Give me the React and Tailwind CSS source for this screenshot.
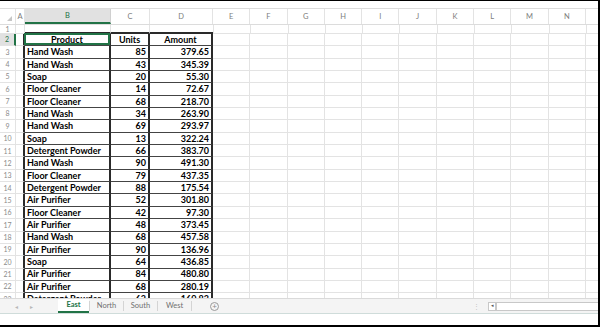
import React from "react";

const rows = [
  ["Hand Wash", 85, "379.65"],
  ["Hand Wash", 43, "345.39"],
  ["Soap", 20, "55.30"],
  ["Floor Cleaner", 14, "72.67"],
  ["Floor Cleaner", 68, "218.70"],
  ["Hand Wash", 34, "263.90"],
  ["Hand Wash", 69, "293.97"],
  ["Soap", 13, "322.24"],
  ["Detergent Powder", 66, "383.70"],
  ["Hand Wash", 90, "491.30"],
  ["Floor Cleaner", 79, "437.35"],
  ["Detergent Powder", 88, "175.54"],
  ["Air Purifier", 52, "301.80"],
  ["Floor Cleaner", 42, "97.30"],
  ["Air Purifier", 48, "373.45"],
  ["Hand Wash", 68, "457.58"],
  ["Air Purifier", 90, "136.96"],
  ["Soap", 64, "436.85"],
  ["Air Purifier", 84, "480.80"],
  ["Air Purifier", 68, "280.19"],
  ["Detergent Powder", 62, "160.83"],
];

const extraCols = ["E", "F", "G", "H", "I", "J", "K", "L", "M", "N"];

const EmptyCells = () => (
  <>
    {extraCols.map((c) => (
      <div key={c} className="w-[37.3px] shrink-0 h-full border-r border-b border-[#e3e3e3]" />
    ))}
    <div className="flex-1 h-full border-b border-[#e3e3e3]" />
  </>
);

const TopRow = () => (
  <div className="flex h-[9px]">
    <div className="w-[16px] shrink-0 h-full border-r border-b border-[#e3e3e3] flex items-center justify-center text-[7px] text-[#8b8b8b]">
      1
    </div>
    <div className="w-[9px] shrink-0 h-full border-r border-b border-[#e3e3e3]" />
    <div className="w-[86px] shrink-0 h-full border-r border-r-[#e3e3e3] border-b-2 border-b-[#2a2a2a]" />
    <div className="w-[39px] shrink-0 h-full border-r border-r-[#e3e3e3] border-b-2 border-b-[#2a2a2a]" />
    <div className="w-[63px] shrink-0 h-full border-b-2 border-b-[#2a2a2a]" />
    <div className="w-0 shrink-0 h-full border-l border-[#e3e3e3]" />
    <EmptyCells />
  </div>
);

const HeadRow = () => (
  <div className="flex h-[12.35px]">
    <div className="w-[16px] shrink-0 h-full bg-[#e1e1e1] border-r-2 border-r-[#217346] border-b border-b-[#e3e3e3] flex items-center justify-center text-[7px] text-[#217346]">
      2
    </div>
    <div className="w-[9px] shrink-0 h-full border-r-2 border-r-[#2a2a2a] border-b border-b-[#e3e3e3]" />
    <div className="relative w-[86px] shrink-0 h-full border-r-2 border-r-[#2a2a2a] border-b border-b-[#444] flex items-center justify-center font-bold">
      Product
      <span className="absolute -left-[1px] -top-[1px] -right-[1px] bottom-0 border-2 border-[#217346]" />
    </div>
    <div className="w-[39px] shrink-0 h-full border-r-2 border-r-[#2a2a2a] border-b border-b-[#444] flex items-center justify-center font-bold">
      Units
    </div>
    <div className="w-[63px] shrink-0 h-full border-r-2 border-r-[#2a2a2a] border-b border-b-[#444] flex items-center justify-center font-bold">
      Amount
    </div>
    <EmptyCells />
  </div>
);

const DataRow = ({ n, product, units, amount }) => (
  <div className="flex h-[12.35px]">
    <div className="w-[16px] shrink-0 h-full border-r border-b border-[#e3e3e3] flex items-center justify-center text-[7px] text-[#8b8b8b]">
      {n}
    </div>
    <div className="w-[9px] shrink-0 h-full border-r-2 border-r-[#2a2a2a] border-b border-b-[#e3e3e3]" />
    <div className="w-[86px] shrink-0 h-full border-r-2 border-r-[#2a2a2a] border-b border-b-[#444] flex items-center pl-[2px] font-bold whitespace-nowrap overflow-hidden">
      {product}
    </div>
    <div className="w-[39px] shrink-0 h-full border-r-2 border-r-[#2a2a2a] border-b border-b-[#444] flex items-center justify-end pr-[2px] font-bold">
      {units}
    </div>
    <div className="w-[63px] shrink-0 h-full border-r-2 border-r-[#2a2a2a] border-b border-b-[#444] flex items-center justify-end pr-[2px] font-bold">
      {amount}
    </div>
    <EmptyCells />
  </div>
);

const ColumnHeader = () => (
  <div className="flex h-[17px] border-t border-b border-[#dcdcdc] text-[7.5px] text-[#7d7d7d]">
    <div className="relative w-[16px] shrink-0 h-full border-r border-[#e3e3e3]">
      <span className="absolute right-[3px] bottom-[3px] w-0 h-0 border-l-[5px] border-l-transparent border-b-[5px] border-b-[#c6c6c6]" />
    </div>
    <div className="w-[9px] shrink-0 h-full border-r border-[#e3e3e3] flex items-center justify-center">A</div>
    <div className="w-[86px] shrink-0 h-full bg-[#e1e1e1] border-r border-[#d0d0d0] border-b-2 border-b-[#217346] flex items-center justify-center text-[#217346]">
      B
    </div>
    <div className="w-[39px] shrink-0 h-full border-r border-[#e3e3e3] flex items-center justify-center">C</div>
    <div className="w-[63px] shrink-0 h-full border-r border-[#e3e3e3] flex items-center justify-center">D</div>
    {extraCols.map((c) => (
      <div key={c} className="w-[37.3px] shrink-0 h-full border-r border-[#e3e3e3] flex items-center justify-center">
        {c}
      </div>
    ))}
    <div className="flex-1 h-full" />
  </div>
);

const Tab = ({ label, active }) => (
  <div
    className={
      active
        ? "w-[31px] h-full flex items-center justify-center bg-white text-[#217346] font-bold border-b-2 border-[#217346]"
        : "w-[33px] h-full flex items-center justify-center text-[#707070]"
    }
  >
    {label}
  </div>
);

const Sep = () => <div className="w-px h-[10px] bg-[#d4d4d4] self-center" />;

const SheetTabs = () => (
  <div className="flex h-[16px] border-t border-b border-[#dadada] border-b-[#cfdcda] bg-[#f4f4f4] text-[7.5px]">
    <div className="w-[58px] flex items-center text-[6px] text-[#b8b8b8]">
      <span className="ml-[15px]">◂</span>
      <span className="ml-[12px]">▸</span>
    </div>
    <Tab label="East" active />
    <Sep />
    <Tab label="North" />
    <Sep />
    <Tab label="South" />
    <Sep />
    <Tab label="West" />
    <Sep />
    <div className="ml-[18px] flex items-center">
      <span className="w-[9px] h-[9px] rounded-full border border-[#9a9a9a] flex items-center justify-center text-[8px] leading-none text-[#8a8a8a]">
        +
      </span>
    </div>
    <div className="flex-1" />
    <div className="flex items-center text-[7px] text-[#c4c4c4] mr-[8px]">⋮</div>
    <div className="flex items-center">
      <div className="w-[8px] h-[9px] border border-[#c8c8c8] bg-white flex items-center justify-center text-[5px] text-[#555]">
        ◂
      </div>
      <div className="w-[102px] h-[9px] border-y border-l border-[#c8c8c8] bg-white" />
    </div>
  </div>
);

export default function App() {
  return (
    <div
      className="w-[600px] h-[327px] bg-white border-t border-r-2 border-b-2 border-black flex flex-col overflow-hidden text-[9px] text-black"
      style={{ fontFamily: "Lato, 'Liberation Sans', sans-serif" }}
    >
      <div className="h-[7px] shrink-0" />
      <ColumnHeader />
      <div className="h-[273px] shrink-0 overflow-hidden">
        <TopRow />
        <HeadRow />
        {rows.map((r, i) => (
          <DataRow key={i} n={i + 3} product={r[0]} units={r[1]} amount={r[2]} />
        ))}
      </div>
      <SheetTabs />
      <div className="flex-1" />
    </div>
  );
}
